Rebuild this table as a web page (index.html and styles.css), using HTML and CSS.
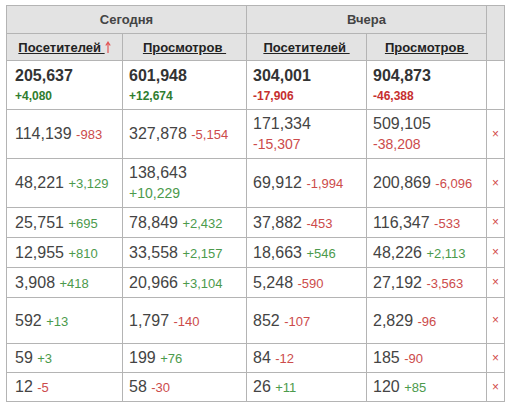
FILE: index.html
```html
<!DOCTYPE html>
<html lang="ru">
  <head>
    <meta charset="UTF-8" />
    <meta name="viewport" content="width=device-width, initial-scale=1.0" />
    <title>Статистика</title>
    <link rel="stylesheet" href="styles.css">
  </head>
  <body>
    <table class="stats">
      <colgroup>
        <col class="c1" />
        <col class="c2" />
        <col class="c3" />
        <col class="c4" />
        <col class="c5" />
      </colgroup>
      <thead>
        <tr class="head-top">
          <th colspan="2">Сегодня</th>
          <th colspan="2">Вчера</th>
          <th rowspan="2"></th>
        </tr>
        <tr class="head-sub">
          <th>
            <a href="#">Посетителей&nbsp;</a><svg class="arrow" width="6" height="12" viewBox="0 0 6 12">
              <path d="M3 12V2M0.8 4.5L3 1.2 5.2 4.5" fill="none" stroke="#e25555" stroke-width="1.2" />
            </svg>
          </th>
          <th><a href="#">Просмотров&nbsp;</a></th>
          <th><a href="#">Посетителей&nbsp;</a></th>
          <th><a href="#">Просмотров&nbsp;</a></th>
        </tr>
      </thead>
      <tbody>
        <tr class="total">
          <td>205,637<span class="d up">+4,080</span></td>
          <td>601,948<span class="d up">+12,674</span></td>
          <td>304,001<span class="d down">-17,906</span></td>
          <td>904,873<span class="d down">-46,388</span></td>
          <td></td>
        </tr>
        <tr class="tall">
          <td>114,139 <span class="d down">-983</span></td>
          <td>327,878 <span class="d down">-5,154</span></td>
          <td class="stack">171,334<span class="d down">-15,307</span></td>
          <td class="stack">509,105<span class="d down">-38,208</span></td>
          <td class="del">×</td>
        </tr>
        <tr class="tall">
          <td>48,221 <span class="d up">+3,129</span></td>
          <td class="stack">138,643<span class="d up">+10,229</span></td>
          <td>69,912 <span class="d down">-1,994</span></td>
          <td>200,869 <span class="d down">-6,096</span></td>
          <td class="del">×</td>
        </tr>
        <tr class="short">
          <td>25,751 <span class="d up">+695</span></td>
          <td>78,849 <span class="d up">+2,432</span></td>
          <td>37,882 <span class="d down">-453</span></td>
          <td>116,347 <span class="d down">-533</span></td>
          <td class="del">×</td>
        </tr>
        <tr class="short">
          <td>12,955 <span class="d up">+810</span></td>
          <td>33,558 <span class="d up">+2,157</span></td>
          <td>18,663 <span class="d up">+546</span></td>
          <td>48,226 <span class="d up">+2,113</span></td>
          <td class="del">×</td>
        </tr>
        <tr class="short">
          <td>3,908 <span class="d up">+418</span></td>
          <td>20,966 <span class="d up">+3,104</span></td>
          <td>5,248 <span class="d down">-590</span></td>
          <td>27,192 <span class="d down">-3,563</span></td>
          <td class="del">×</td>
        </tr>
        <tr class="mid">
          <td>592 <span class="d up">+13</span></td>
          <td>1,797 <span class="d down">-140</span></td>
          <td>852 <span class="d down">-107</span></td>
          <td>2,829 <span class="d down">-96</span></td>
          <td class="del">×</td>
        </tr>
        <tr class="small">
          <td>59 <span class="d up">+3</span></td>
          <td>199 <span class="d up">+76</span></td>
          <td>84 <span class="d down">-12</span></td>
          <td>185 <span class="d down">-90</span></td>
          <td class="del">×</td>
        </tr>
        <tr class="small">
          <td>12 <span class="d down">-5</span></td>
          <td>58 <span class="d down">-30</span></td>
          <td>26 <span class="d up">+11</span></td>
          <td>120 <span class="d up">+85</span></td>
          <td class="del">×</td>
        </tr>
      </tbody>
    </table>
  </body>
</html>
```

FILE: styles.css
```css
body {
  margin: 0;
  padding: 5px 0 0 6px;
  background: #fff;
  font-family: "Liberation Sans", Arial, sans-serif;
  color: #444;
}

.stats {
  border-collapse: collapse;
  table-layout: fixed;
  width: 498px;
}

.c1 {
  width: 116px;
}

.c2 {
  width: 124px;
}

.c3,
.c4 {
  width: 120px;
}

.c5 {
  width: 18px;
}

.stats th,
.stats td {
  border: 1px solid #b4b4b4;
  padding: 0 6px;
  vertical-align: middle;
}

.stats th {
  background: #e3e3e3;
  font-size: 13px;
  font-weight: bold;
  color: #444;
  text-align: center;
  white-space: nowrap;
}

.head-top th {
  height: 27px;
}

.head-sub th {
  height: 26px;
}

.head-sub a {
  color: #222;
  text-decoration: underline;
}

.arrow {
  vertical-align: -1px;
}

.stats td {
  font-size: 16px;
  line-height: 21px;
  white-space: nowrap;
}

.stats td:first-child {
  padding-left: 8px;
}

.d {
  font-size: 13px;
}

.up {
  color: #4c9a4c;
}

.down {
  color: #cc4b4b;
}

.total td {
  height: 48px;
  font-weight: bold;
  color: #333;
}

.total .d {
  display: block;
  font-size: 12px;
  line-height: 20px;
}

.total .up {
  color: #2f7d2f;
}

.total .down {
  color: #c62f2f;
}

.stack .d {
  display: block;
  font-size: 14px;
}

.tall td {
  height: 48px;
}

.short td {
  height: 29px;
}

.mid td {
  height: 45px;
}

.small td {
  height: 28px;
}

.del {
  text-align: center;
  color: #d24a4a;
  font-size: 12px !important;
  padding: 0 !important;
}
```
